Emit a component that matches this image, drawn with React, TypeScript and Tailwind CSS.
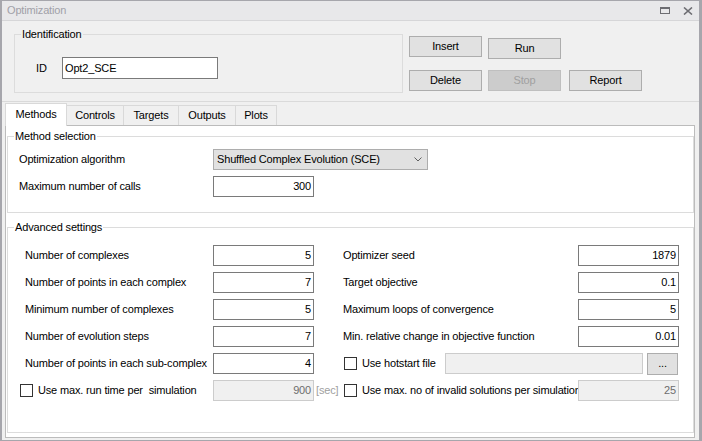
import React from 'react';

function Btn({ children, disabled, className = '' }: { children: React.ReactNode; disabled?: boolean; className?: string }) {
  return (
    <div
      className={`w-[73px] h-[21px] flex items-center justify-center border ${
        disabled ? 'bg-[#cccccc] border-[#bfbfbf] text-[#a0a0a0]' : 'bg-[#e1e1e1] border-[#adadad] text-black'
      } ${className}`}
    >
      {children}
    </div>
  );
}

function NumField({ value, disabled }: { value: string; disabled?: boolean }) {
  return (
    <div
      className={`w-[101px] h-[21px] shrink-0 flex items-center justify-end pr-[2px] border ${
        disabled ? 'bg-[#f0f0f0] border-[#cccccc] text-[#6d6d6d]' : 'bg-white border-[#7a7a7a] text-black'
      }`}
    >
      {value}
    </div>
  );
}

function Check() {
  return <span className="block w-[13px] h-[13px] shrink-0 border border-[#333333] bg-white" />;
}

const leftRows = [
  ['Number of complexes', '5'],
  ['Number of points in each complex', '7'],
  ['Minimum number of complexes', '5'],
  ['Number of evolution steps', '7'],
  ['Number of points in each sub-complex', '4'],
];

const rightRows = [
  ['Optimizer seed', '1879'],
  ['Target objective', '0.1'],
  ['Maximum loops of convergence', '5'],
  ['Min. relative change in objective function', '0.01'],
];

const tabs = [
  { name: 'Controls', w: 'w-[57px]' },
  { name: 'Targets', w: 'w-[55px]' },
  { name: 'Outputs', w: 'w-[57px]' },
  { name: 'Plots', w: 'w-[41px]' },
];

export default function App() {
  return (
    <div className="w-[702px] h-[441px] box-border flex flex-col bg-[#f0f0f0] border-t border-l-2 border-r-[3px] border-b border-[#a6a6ac] font-['Liberation_Sans',Arial,sans-serif] text-[11px] tracking-[-0.16px] text-black overflow-hidden">
      {/* title bar */}
      <div className="h-[20px] shrink-0 box-border flex items-center justify-between bg-[#e8e8ea] border-b border-[#d6d6d8] pl-[5px] pr-[6px] text-[#a0a0a8]">
        <span>Optimization</span>
        <div className="flex items-center gap-[13px]">
          <svg width="10" height="7" viewBox="0 0 10 7">
            <rect x="0.5" y="0.5" width="9" height="6" fill="none" stroke="#6d6d72" />
            <rect x="0" y="0" width="10" height="2" fill="#6d6d72" />
          </svg>
          <svg width="10" height="8" viewBox="0 0 10 8">
            <path d="M1 0.5 L9 7.5 M9 0.5 L1 7.5" stroke="#6d6d72" strokeWidth="1.6" />
          </svg>
        </div>
      </div>

      {/* identification + actions */}
      <div className="h-[81px] shrink-0 box-border flex items-start pl-[12px] border-b border-[#dadada]">
        <fieldset className="mt-[6px] w-[389px] h-[66px] box-border border border-[#dcdcdc]">
          <legend className="ml-[6px] px-px leading-[14px]">Identification</legend>
          <div className="h-[50px] flex items-center pl-[21px] pt-[4px]">
            <span className="w-[26px]">ID</span>
            <div className="w-[156px] h-[22px] box-border border border-[#7a7a7a] bg-white flex items-center pl-[2px]">
              Opt2_SCE
            </div>
          </div>
        </fieldset>
        <div className="ml-[6px] mt-[15px] flex flex-col gap-[11px]">
          <div className="flex items-start gap-[6px]">
            <Btn>Insert</Btn>
            <Btn className="mt-[2px]">Run</Btn>
          </div>
          <div className="flex items-start">
            <Btn>Delete</Btn>
            <Btn disabled className="ml-[6px]">Stop</Btn>
            <Btn className="ml-[8px]">Report</Btn>
          </div>
        </div>
      </div>

      {/* tabs */}
      <div className="flex-1 flex flex-col pl-[3px] pr-[4px] pb-[2px] min-h-0">
        <div className="h-[23px] shrink-0 flex items-end">
          <div className="relative z-10 w-[62px] h-[23px] -mb-px box-border bg-white border-l border-t border-r border-[#d9d9d9] flex items-center justify-center pb-[1px]">
            Methods
          </div>
          {tabs.map((t) => (
            <div
              key={t.name}
              className={`${t.w} h-[20px] box-border border-t border-r border-[#d9d9d9] bg-[#f0f0f0] flex items-center justify-center`}
            >
              {t.name}
            </div>
          ))}
        </div>

        <div className="flex-1 flex flex-col bg-white border border-[#bcbcbc] pb-[4px] min-h-0">
          <fieldset className="ml-px mt-[3px] border border-[#dcdcdc] flex flex-col gap-[6px] pt-[6px] pb-[15px]">
            <legend className="ml-[6px] px-px leading-[14px]">Method selection</legend>
            <div className="h-[21px] flex items-center">
              <span className="w-[205px] pl-[11px]">Optimization algorithm</span>
              <div className="w-[215px] h-[21px] box-border bg-[#e1e1e1] border border-[#adadad] flex items-center justify-between pl-[3px] pr-[5px]">
                <span>Shuffled Complex Evolution (SCE)</span>
                <svg width="8" height="5" viewBox="0 0 8 5">
                  <path d="M0.5 0.5 L4 4 L7.5 0.5" fill="none" stroke="#606060" strokeWidth="1" />
                </svg>
              </div>
            </div>
            <div className="h-[21px] flex items-center">
              <span className="w-[205px] pl-[11px]">Maximum number of calls</span>
              <NumField value="300" />
            </div>
          </fieldset>

          <fieldset className="ml-px mt-[7px] flex-1 border border-[#dcdcdc] flex flex-col gap-[6px] pt-[11px]">
            <legend className="ml-[6px] px-px leading-[14px]">Advanced settings</legend>
            {leftRows.map(([label, value], i) => (
              <div key={label} className="h-[21px] flex items-center">
                <span className="w-[205px] shrink-0 pl-[17px] whitespace-nowrap">{label}</span>
                <NumField value={value} />
                {i < 4 ? (
                  <>
                    <span className="ml-[29px] w-[235px] shrink-0 whitespace-nowrap">{rightRows[i][0]}</span>
                    <NumField value={rightRows[i][1]} />
                  </>
                ) : (
                  <div className="ml-[29px] flex items-center">
                    <div className="w-[19px] pl-px">
                      <Check />
                    </div>
                    <span className="w-[83px] whitespace-nowrap">Use hotstart file</span>
                    <div className="w-[198px] h-[21px] box-border bg-[#f0f0f0] border border-[#cccccc]" />
                    <div className="ml-[4px] w-[31px] h-[22px] box-border bg-[#e1e1e1] border border-[#adadad] flex items-center justify-center">
                      ...
                    </div>
                  </div>
                )}
              </div>
            ))}
            <div className="h-[21px] flex items-center">
              <div className="w-[205px] shrink-0 pl-[12px] flex items-center">
                <Check />
                <span className="ml-[5px] whitespace-pre">Use max. run time per  simulation</span>
              </div>
              <NumField value="900" disabled />
              <span className="w-[29px] shrink-0 pl-[2px] text-[#a0a0a0]">[sec]</span>
              <div className="w-[19px] shrink-0 pl-px">
                <Check />
              </div>
              <span className="w-[216px] shrink-0 overflow-hidden whitespace-nowrap">
                Use max. no of invalid solutions per simulation
              </span>
              <NumField value="25" disabled />
            </div>
          </fieldset>
        </div>
      </div>
    </div>
  );
}
